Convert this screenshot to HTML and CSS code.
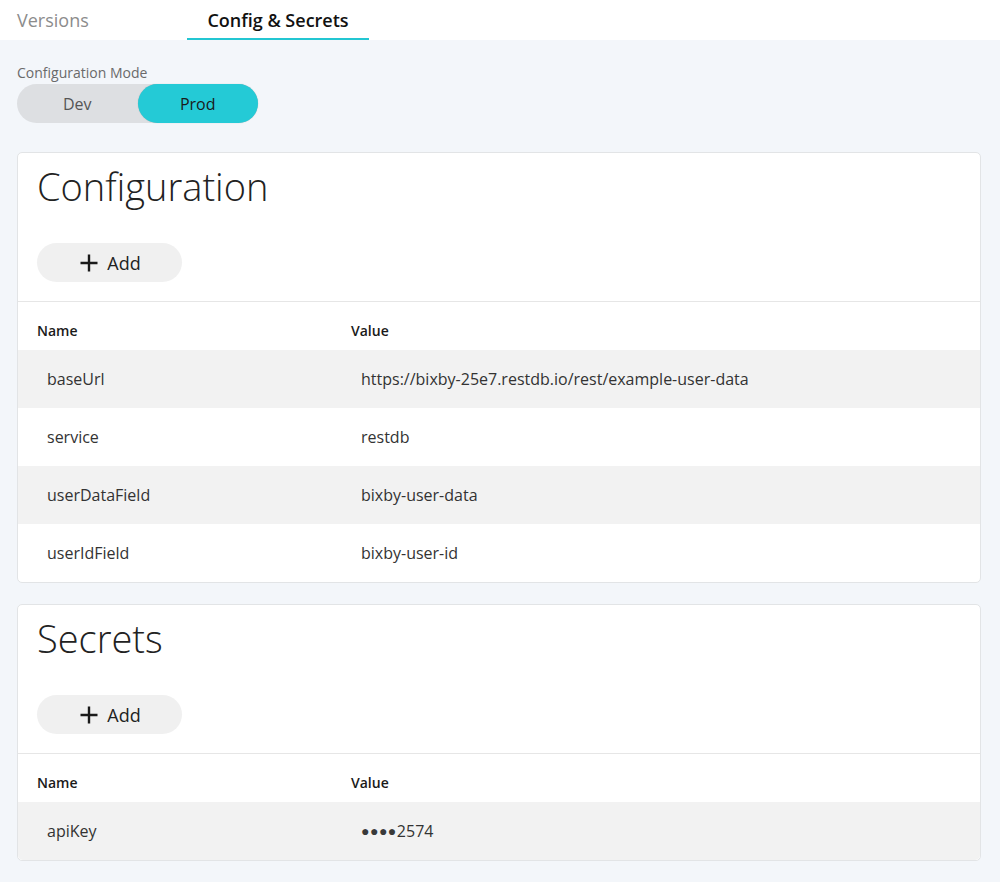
FILE: index.html
```html
<!DOCTYPE html>
<html lang="en">
<head>
<meta charset="utf-8">
<title>Config &amp; Secrets</title>
<link rel="stylesheet" href="styles.css">
</head>
<body>
<nav class="tabs">
  <div class="tab tab-versions">Versions</div>
  <div class="tab tab-active">Config &amp; Secrets</div>
</nav>
<main class="page">
  <div class="mode">
    <div class="mode-label">Configuration Mode</div>
    <div class="toggle">
      <span class="toggle-opt">Dev</span>
      <span class="toggle-opt toggle-on">Prod</span>
    </div>
  </div>

  <section class="card">
    <h2 class="card-title">Configuration</h2>
    <button class="add-btn"><svg class="plus" viewBox="0 0 18 18" width="18" height="18"><path d="M9 0.5V17.5M0.5 9H17.5" stroke="#1a1a1a" stroke-width="2.4" fill="none"/></svg><span>Add</span></button>
    <div class="table">
      <div class="thead"><div class="c1">Name</div><div class="c2">Value</div></div>
      <div class="row alt"><div class="c1">baseUrl</div><div class="c2">https://bixby-25e7.restdb.io/rest/example-user-data</div></div>
      <div class="row"><div class="c1">service</div><div class="c2">restdb</div></div>
      <div class="row alt"><div class="c1">userDataField</div><div class="c2">bixby-user-data</div></div>
      <div class="row"><div class="c1">userIdField</div><div class="c2">bixby-user-id</div></div>
    </div>
  </section>

  <section class="card">
    <h2 class="card-title">Secrets</h2>
    <button class="add-btn"><svg class="plus" viewBox="0 0 18 18" width="18" height="18"><path d="M9 0.5V17.5M0.5 9H17.5" stroke="#1a1a1a" stroke-width="2.4" fill="none"/></svg><span>Add</span></button>
    <div class="table">
      <div class="thead"><div class="c1">Name</div><div class="c2">Value</div></div>
      <div class="row alt"><div class="c1">apiKey</div><div class="c2"><span class="dots">●●●●</span>2574</div></div>
    </div>
  </section>
</main>
</body>
</html>
```
FILE: styles.css
```css
* { box-sizing: border-box; }
html, body { margin: 0; padding: 0; }
body {
  font-family: "Open Sans", "Noto Sans", sans-serif;
  background: #f3f6fa;
  color: #333;
  width: 1000px;
  min-height: 882px;
}
.tabs {
  height: 40px;
  background: #fff;
  display: flex;
  padding-left: 17px;
}
.tab {
  font-size: 18px;
  line-height: 40px;
  height: 40px;
}
.tab-versions {
  width: 170px;
  color: #8c8c8c;
}
.tab-active {
  width: 182px;
  text-align: center;
  color: #111;
  font-weight: 600;
  border-bottom: 2px solid #23c6d2;
}
.page {
  padding: 24px 19px 22px 17px;
}
.mode-label {
  font-size: 14px;
  color: #6a6a6a;
  line-height: 18px;
}
.toggle {
  margin-top: 2px;
  width: 241px;
  height: 39px;
  background: #dddfe2;
  border-radius: 20px;
  display: flex;
}
.toggle-opt {
  flex: 1;
  display: flex;
  align-items: center;
  justify-content: center;
  font-size: 16px;
  color: #555;
  border-radius: 20px;
}
.toggle-on {
  background: #24cad6;
  color: #1a1a1a;
  box-shadow: 0 0 1px rgba(0,0,0,0.25);
}
.card {
  margin-top: 29px;
  background: #fff;
  border: 1px solid #e2e4e6;
  border-radius: 5px;
}
.card + .card { margin-top: 21px; }
.card-title {
  margin: 0;
  padding: 9px 19px 0;
  font-weight: 300;
  font-size: 38px;
  line-height: 48px;
  color: #222;
}
.add-btn {
  margin: 33px 0 19px 19px;
  width: 145px;
  height: 39px;
  border: none;
  border-radius: 20px;
  background: #f0f0f0;
  display: flex;
  align-items: center;
  justify-content: center;
  gap: 9px;
  font-family: inherit;
  font-size: 18px;
  color: #222;
  padding: 0 0 0 2px;
}
.plus { display: block; }
.table {
  border-top: 1px solid #e6e6e6;
}
.thead, .row {
  display: flex;
}
.thead {
  height: 48px;
  padding-top: 8px;
  align-items: center;
  font-size: 14px;
  font-weight: 600;
  color: #1a1a1a;
}
.thead .c1 { width: 314px; padding-left: 19px; }
.thead .c2 { padding-left: 19px; }
.row {
  height: 58px;
  align-items: center;
  font-size: 16px;
  color: #333;
}
.row.alt { background: #f2f2f2; }
.row:last-child { border-radius: 0 0 5px 5px; }
.row .c1 { width: 314px; padding-left: 29px; }
.row .c2 { padding-left: 29px; }
.dots { font-size: 14px; letter-spacing: 0.5px; color: #3a3a3a; vertical-align: 1px; }
```
